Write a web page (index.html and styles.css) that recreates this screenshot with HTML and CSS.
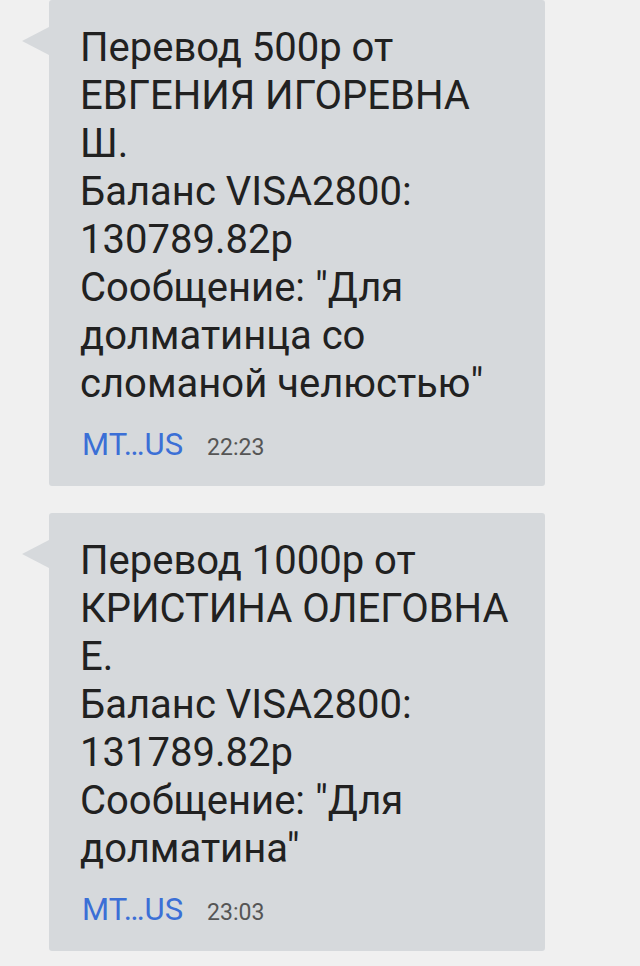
FILE: index.html
```html
<!DOCTYPE html>
<html lang="ru">
<head>
<meta charset="UTF-8" />
<meta name="viewport" content="width=device-width, initial-scale=1.0"/>
<title>Сообщения</title>
<link rel="stylesheet" href="styles.css">
</head>
<body>

<div class="thread">
<div class="bubble">
<div class="text">Перевод 500р от ЕВГЕНИЯ ИГОРЕВНА Ш.<br>Баланс VISA2800: 130789.82р<br>Сообщение: "Для долматинца со сломаной челюстью"</div>
<div class="meta">
<span class="sender">MT…US</span>
<span class="time">22:23</span>
</div>
</div>

<div class="bubble">
<div class="text">Перевод 1000р от КРИСТИНА ОЛЕГОВНА Е.<br>Баланс VISA2800: 131789.82р<br>Сообщение: "Для долматина"</div>
<div class="meta">
<span class="sender">MT…US</span>
<span class="time">23:03</span>
</div>
</div>
</div>

</body>
</html>
```

FILE: styles.css
```css
* { box-sizing: border-box; }
body {
margin: 0;
background-color: #f0f0f0;
font-family: Roboto, 'Noto Sans', sans-serif;
color: #212121;
}
.thread {
display: flex;
flex-direction: column;
gap: 27px;
padding-left: 49px;
}
.bubble {
position: relative;
width: 496px;
background-color: #d6d9dc;
border-radius: 3px;
padding: 24px 24px 23px 31px;
}
.bubble::before {
content: "";
position: absolute;
left: -27px;
top: 27px;
border-right: 27px solid #d6d9dc;
border-top: 14px solid transparent;
border-bottom: 14px solid transparent;
}
.text {
font-size: 40px;
line-height: 48px;
}
.meta {
display: flex;
align-items: baseline;
gap: 24px;
margin-top: 19px;
height: 36px;
line-height: 36px;
padding-left: 2px;
}
.sender {
font-size: 31px;
color: #3b6fd6;
}
.time {
font-size: 23px;
color: #555;
}
```
